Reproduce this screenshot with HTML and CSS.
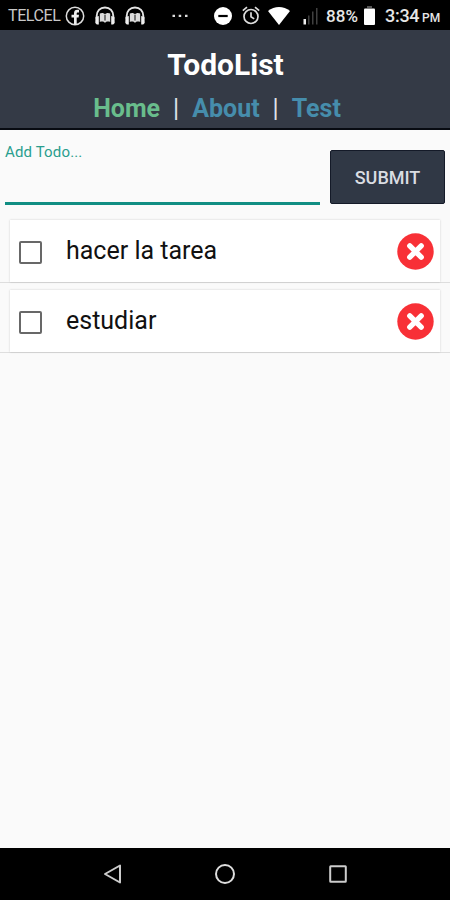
FILE: index.html
```html
<!DOCTYPE html>
<html lang="es">
<head>
  <meta charset="UTF-8">
  <meta name="viewport" content="width=device-width, initial-scale=1">
  <title>TodoList</title>
  <link rel="stylesheet" href="styles.css">
</head>
<body>

<div class="status-bar">
  <span class="carrier">TELCEL</span>
  <svg class="facebook" width="20" height="20" viewBox="0 0 20 20">
    <circle cx="10" cy="10" r="8.7" fill="none" stroke="#ddd" stroke-width="1.5"/>
    <path d="M9 18.5V11.5H6.5V8.8H9V7.2C9 4.9 10.3 3.8 12.2 3.8H14V6.4H12.8C12 6.4 11.7 6.8 11.7 7.5V8.8H14L13.6 11.5H11.7V18.5Z" fill="#eee"/>
  </svg>
  <svg class="headphones" width="20" height="19" viewBox="0 0 20 19">
    <path d="M1.7 13V10C1.7 5 5 1.500 10 1.500S18.300 5 18.300 10V13" fill="none" stroke="#e4e4e4" stroke-width="1.900"/>
    <path d="M.5 11L3.800 10V18.500H1.800L.3 17ZM19.500 11L16.200 10V18.500H18.200L19.700 17Z" fill="#eee"/>
    <path d="M4.800 7.500C7 6.300 9 7 10 8.200C11 7 13 6.300 15.200 7.500V16C13 15.200 11 15.700 10 17C9 15.700 7 15.200 4.800 16Z" fill="#ddd"/>
    <path d="M10 8.700V14.500" stroke="#333" stroke-width="1.200"/>
  </svg>
  <svg class="headphones" width="20" height="19" viewBox="0 0 20 19">
    <path d="M1.7 13V10C1.7 5 5 1.500 10 1.500S18.300 5 18.300 10V13" fill="none" stroke="#e4e4e4" stroke-width="1.900"/>
    <path d="M.5 11L3.800 10V18.500H1.800L.3 17ZM19.500 11L16.200 10V18.500H18.200L19.700 17Z" fill="#eee"/>
    <path d="M4.800 7.500C7 6.300 9 7 10 8.200C11 7 13 6.300 15.200 7.500V16C13 15.200 11 15.700 10 17C9 15.700 7 15.200 4.800 16Z" fill="#ddd"/>
    <path d="M10 8.700V14.500" stroke="#333" stroke-width="1.200"/>
  </svg>
  <svg class="more" width="16" height="4" viewBox="0 0 16 4">
    <path d="M.5 .7H3V2.900H.5ZM6.700 .7H9.200V2.900H6.700ZM13 .7H15.500V2.900H13Z" fill="#ddd"/>
  </svg>
  <svg class="do-not-disturb" width="18" height="18" viewBox="0 0 18 18">
    <circle cx="9" cy="9" r="9" fill="#fff"/>
    <path d="M4.300 9H13.700" stroke="#000" stroke-width="2.200"/>
  </svg>
  <svg class="alarm" width="18" height="19" viewBox="0 0 18 19">
    <circle cx="9" cy="10.500" r="7" fill="none" stroke="#ddd" stroke-width="1.700"/>
    <path d="M.8 4.600L5 1.200M17.200 4.600L13 1.200M9 6.300V10.800L12.200 12.900" fill="none" stroke="#ddd" stroke-width="1.700"/>
  </svg>
  <svg class="wifi" width="22" height="18" viewBox="0 0 22 18">
    <path d="M0 4C6.500-1.200 15.500-1.200 22 4L11 18Z" fill="#fff"/>
  </svg>
  <svg class="signal" width="15" height="18" viewBox="0 0 15 18">
    <path d="M.5 12H3V17.500H.5Z" fill="#eee"/>
    <path d="M5 8.500H6.500V17.500H5ZM9 4.500H10.500V17.500H9ZM13 1H14.500V17.500H13Z" fill="#404040"/>
  </svg>
  <span class="charge">88%</span>
  <svg class="battery" width="11" height="19" viewBox="0 0 11 19">
    <path d="M3 0H8V2H3Z" fill="#555"/>
    <rect y="2.500" width="11" height="16.500" rx="1" fill="#fff"/>
  </svg>
  <span class="clock">3:34</span>
  <span class="meridiem">PM</span>
</div>

<header class="header">
  <h1 class="title">TodoList</h1>
  <nav class="nav">
    <a class="link active">Home</a>
    <span class="separator">|</span>
    <a class="link">About</a>
    <span class="separator">|</span>
    <a class="link">Test</a>
  </nav>
</header>

<main class="content">
  <form class="add-todo">
    <div class="field">
      <label class="field-label" for="todo">Add Todo...</label>
      <input class="field-input" id="todo" type="text">
    </div>
    <button class="submit" type="button">SUBMIT</button>
  </form>

  <ul class="todos">
    <li class="row">
      <div class="todo">
        <span class="checkbox"></span>
        <span class="text">hacer la tarea</span>
        <svg class="delete" width="37" height="37" viewBox="0 0 37 37">
          <circle cx="18.500" cy="18.500" r="18.200" fill="#f83036"/>
          <path d="M12.800 12.800L24.200 24.200M24.200 12.800L12.800 24.200" stroke="#fff" stroke-width="5.400" stroke-linecap="round"/>
        </svg>
      </div>
    </li>
    <li class="row">
      <div class="todo">
        <span class="checkbox"></span>
        <span class="text">estudiar</span>
        <svg class="delete" width="37" height="37" viewBox="0 0 37 37">
          <circle cx="18.500" cy="18.500" r="18.200" fill="#f83036"/>
          <path d="M12.800 12.800L24.200 24.200M24.200 12.800L12.800 24.200" stroke="#fff" stroke-width="5.400" stroke-linecap="round"/>
        </svg>
      </div>
    </li>
  </ul>
</main>

<div class="system-nav">
  <svg width="20" height="22" viewBox="0 0 20 22">
    <path d="M18 2.500V19.500L3 11Z" fill="none" stroke="#ccc" stroke-width="2" stroke-linejoin="round"/>
  </svg>
  <svg width="22" height="22" viewBox="0 0 22 22">
    <circle cx="11" cy="11" r="9" fill="none" stroke="#ddd" stroke-width="2"/>
  </svg>
  <svg width="20" height="20" viewBox="0 0 20 20">
    <rect x="2.200" y="2.200" width="15.600" height="15.600" rx=".5" fill="none" stroke="#ccc" stroke-width="2"/>
  </svg>
</div>

</body>
</html>
```

FILE: styles.css
```css
* {
  box-sizing: border-box;
}

body {
  display: flex;
  flex-direction: column;
  height: 900px;
  margin: 0;
  background: #fafafa;
  color: #111;
  font-family: Roboto, sans-serif;
}

.status-bar {
  display: flex;
  align-items: center;
  flex: none;
  height: 30px;
  padding: 1px 0 0 8px;
  background: #000;
  color: #e6e6e6;
  font-size: 18px;
  line-height: 30px;
  white-space: nowrap;
}

.status-bar svg {
  flex: none;
}

.carrier {
  width: 57px;
  padding-top: 1px;
  color: #c8c8c8;
  font-size: 16px;
  letter-spacing: -0.4px;
}

.headphones {
  margin-left: 10px;
}

.more {
  margin-left: 27px;
}

.do-not-disturb {
  margin-left: 26px;
}

.alarm {
  margin-left: 10px;
}

.wifi {
  margin-left: 8px;
}

.signal {
  margin-left: 13px;
}

.charge {
  width: 38px;
  margin-left: 8px;
  padding-top: 1px;
  font-weight: 500;
  font-size: 17px;
  letter-spacing: 0.1px;
}

.clock {
  width: 37px;
  margin-left: 10px;
  padding-top: 1px;
  font-weight: 500;
  letter-spacing: -0.3px;
}

.meridiem {
  padding-top: 4px;
  font-weight: 500;
  font-size: 12px;
}

.header {
  flex: none;
  height: 100px;
  padding-top: 17px;
  border-bottom: 2px solid #080b12;
  background: #343a46;
  text-align: center;
}

.title {
  margin: 0;
  padding-left: 1px;
  color: #fff;
  font-size: 30px;
  font-weight: bold;
  line-height: 35px;
}

.nav {
  display: flex;
  justify-content: center;
  gap: 13px;
  margin: 12px 16px 0 0;
  font-size: 25px;
  font-weight: bold;
  line-height: 30px;
}

.link {
  color: #468dac;
}

.link.active {
  color: #69bd8c;
}

.separator {
  color: #dfe3ea;
  font-weight: normal;
}

.content {
  flex: 1;
}

.add-todo {
  display: flex;
  gap: 10px;
  height: 90px;
  padding: 0 5px;
}

.field {
  display: flex;
  flex-direction: column;
  width: 315px;
  padding-top: 13px;
}

.field-label {
  color: #2a9e8e;
  font-size: 15px;
  letter-spacing: 0.15px;
  line-height: 18px;
}

.field-input {
  width: 100%;
  height: 44px;
  padding: 0;
  border: 0;
  border-bottom: 3px solid #118e83;
  background: none;
  font: 24px Roboto, sans-serif;
  outline: none;
}

.submit {
  width: 115px;
  height: 54px;
  margin-top: 20px;
  padding: 1px 0 0;
  border: 1px solid #141a28;
  border-radius: 2px;
  background: #303845;
  color: #dadde2;
  font: 500 18px Roboto, sans-serif;
}

.todos {
  margin: 0;
  padding: 0;
  list-style: none;
}

.row {
  height: 70px;
  padding: 0 10px;
  border-bottom: 1px solid #dedede;
}

.row:first-child {
  height: 63px;
}

.row + .row {
  padding-top: 7px;
}

.todo {
  display: flex;
  align-items: center;
  height: 62px;
  padding: 0 6px 0 9px;
  background: #fff;
  box-shadow: 0 0 2px rgba(0, 0, 0, 0.18);
}

.checkbox {
  width: 23px;
  height: 23px;
  margin-top: 3px;
  border: 2px solid #686868;
  border-radius: 2px;
}

.text {
  flex: 1;
  margin-left: 24px;
  font-size: 25px;
  line-height: 30px;
}

.system-nav {
  display: flex;
  align-items: center;
  justify-content: center;
  gap: 92px;
  flex: none;
  height: 52px;
  background: #000;
}
```
